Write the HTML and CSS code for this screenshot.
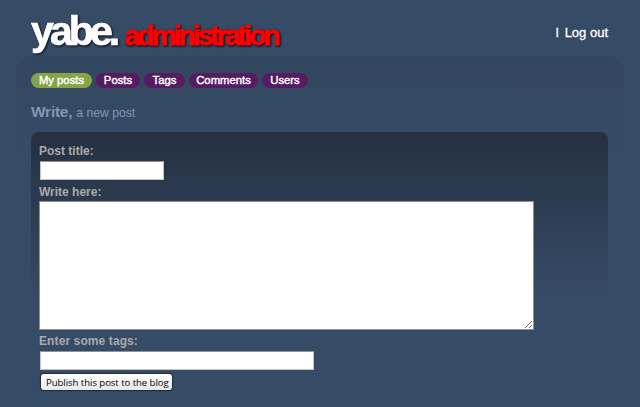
FILE: index.html
```html
<!DOCTYPE html>
<html lang="en">
<head>
<meta charset="utf-8">
<title>yabe. administration</title>
<link rel="stylesheet" href="styles.css">
</head>
<body>
<header class="header">
  <h1 class="logo"><span class="brand">yabe.</span><span class="section">administration</span></h1>
  <div class="tools"><span>l</span><a>Log out</a></div>
</header>
<main class="main">
  <nav class="menu">
    <a class="tab selected w-my">My posts</a>
    <a class="tab w-posts">Posts</a>
    <a class="tab w-tags">Tags</a>
    <a class="tab w-comments">Comments</a>
    <a class="tab w-users">Users</a>
  </nav>
  <h2 class="title"><span class="write">Write,</span><span class="sub">a new post</span></h2>
  <form class="form">
    <label class="label" for="title">Post title:</label>
    <input class="field field-title" id="title" type="text">
    <label class="label label-content" for="content">Write here:</label>
    <textarea class="content" id="content"></textarea>
    <label class="label label-tags" for="tags">Enter some tags:</label>
    <input class="field field-tags" id="tags" type="text">
    <button class="publish" type="button"><span>Publish this post to the blog</span></button>
  </form>
</main>
</body>
</html>
```
FILE: styles.css
```css
* { box-sizing: border-box; }
body {
  margin: 0;
  height: 407px;
  overflow: hidden;
  background: #364b66;
  font-family: "Liberation Sans", Arial, sans-serif;
  font-size: 13px;
}
.header {
  display: flex;
  justify-content: space-between;
  height: 56px;
  padding: 0 32px 0 31px;
}
.logo {
  display: flex;
  align-items: baseline;
  margin: 0;
  height: 56px;
  padding-top: 7px;
  line-height: 48px;
  color: #fff;
  filter: drop-shadow(1px 1px 1px rgba(0, 0, 0, .85));
  white-space: nowrap;
}
.brand {
  width: 94px;
  font-size: 41px;
  letter-spacing: -3.9px;
  -webkit-text-stroke: .7px #fff;
}
.section {
  color: #f00;
  font-size: 28px;
  letter-spacing: -2.85px;
  -webkit-text-stroke: .9px #f00;
}
.tools {
  display: flex;
  gap: 6px;
  padding-top: 25px;
  line-height: 15px;
  color: #fff;
  -webkit-text-stroke: .3px #fff;
}
.main {
  height: 360px;
  margin: 0 16px;
  padding: 17px 16px 0 15px;
  border-radius: 15px;
  background: linear-gradient(#32465f, #364b66 100px);
}
.menu { display: flex; gap: 4px; height: 15px; }
.tab {
  height: 15px;
  border-radius: 8px;
  background: #561b61;
  color: #fff;
  font-size: 11.3px;
  line-height: 15px;
  text-align: center;
  white-space: nowrap;
  -webkit-text-stroke: .4px #fff;
}
.selected { background: #83a548; }
.w-my { width: 61px; }
.w-posts { width: 44px; }
.w-tags { width: 41px; }
.w-comments { width: 69px; }
.w-users { width: 46px; }
.title {
  display: flex;
  align-items: baseline;
  gap: 4px;
  height: 44px;
  margin: 0;
  padding-top: 14px;
  color: #8297b2;
  line-height: 20px;
}
.write { font-size: 15.5px; letter-spacing: -.25px; }
.sub { font-size: 12.2px; font-weight: normal; }
.form {
  display: flex;
  flex-direction: column;
  align-items: flex-start;
  height: 275px;
  padding: 11px 8px 0;
  border-radius: 8px;
  background: linear-gradient(#253041, #364b66 165px);
}
.label {
  height: 18px;
  color: #aaa;
  font-size: 12px;
  font-weight: bold;
  line-height: 16px;
}
.field {
  height: 19px;
  margin: 0 0 0 1px;
  padding: 0;
  border: 1px solid #c4c4c4;
  border-top-color: #929292;
  background: #fff;
  outline: 0;
}
.field-title { width: 124px; }
.field-tags { width: 274px; }
.label-content { height: 17px; margin-top: 4px; }
.content {
  width: 495px;
  height: 129px;
  margin: 0;
  padding: 2px;
  border: 1px solid #8f8f8f;
  border-radius: 0;
  background: #fff;
  resize: both;
  outline: 0;
}
.label-tags { height: 21px; padding-top: 3px; letter-spacing: .1px; }
.publish {
  display: flex;
  align-items: center;
  width: 131px;
  height: 16px;
  margin: 4px 0 0 2px;
  padding: 2px 0 0 5px;
  border: 0;
  border-radius: 3px;
  background: linear-gradient(#fff, #e8e8e8);
  box-shadow: 0 0 1px 1px #1f2c3d;
  color: #000;
  font: 9.6px/14px "Open Sans", sans-serif;
  letter-spacing: -.06px;
  white-space: nowrap;
}
```
